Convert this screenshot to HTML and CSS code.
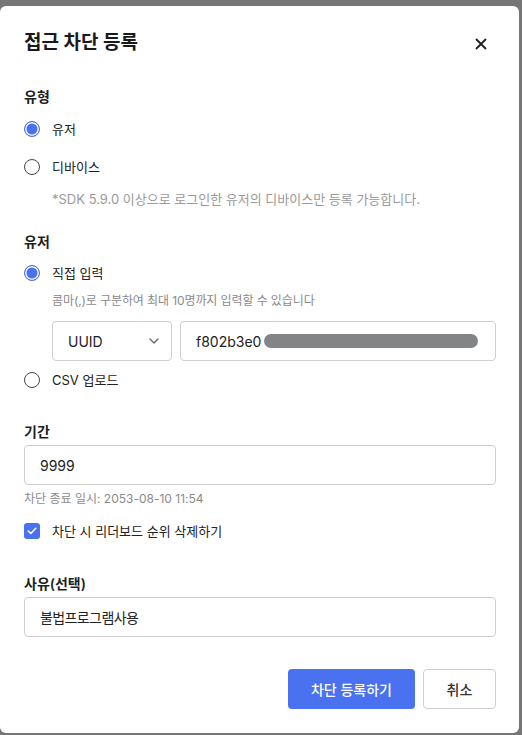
FILE: index.html
```html
<!DOCTYPE html>
<html lang="ko">
<head>
<meta charset="utf-8">
<title>접근 차단 등록</title>
<link rel="stylesheet" href="styles.css">
</head>
<body>
<div class="modal">
  <div class="modal-header">
    <h2 class="title">접근 차단 등록</h2>
    <button class="close" aria-label="닫기">
      <svg width="12" height="12" viewBox="0 0 12 12"><path d="M1.5 1.5 L10.5 10.5 M10.5 1.5 L1.5 10.5" stroke="#1f1f1f" stroke-width="1.8" stroke-linecap="round"/></svg>
    </button>
  </div>

  <div class="label l-type">유형</div>
  <div class="radio r-user"><span class="dot checked"></span><span>유저</span></div>
  <div class="radio r-device"><span class="dot"></span><span>디바이스</span></div>
  <div class="note">*SDK 5.9.0 이상으로 로그인한 유저의 디바이스만 등록 가능합니다.</div>

  <div class="label l-user">유저</div>
  <div class="radio r-direct"><span class="dot checked"></span><span>직접 입력</span></div>
  <div class="helper">콤마(,)로 구분하여 최대 10명까지 입력할 수 있습니다</div>
  <div class="input-row">
    <div class="select">
      <span>UUID</span>
      <svg width="10" height="6" viewBox="0 0 10 6"><path d="M1 1 L5 5 L9 1" fill="none" stroke="#666" stroke-width="1.3" stroke-linecap="round" stroke-linejoin="round"/></svg>
    </div>
    <div class="box uuid"><span>f802b3e0</span><span class="blur"></span></div>
  </div>
  <div class="radio r-csv"><span class="dot"></span><span>CSV 업로드</span></div>

  <div class="label l-period">기간</div>
  <div class="box full period">9999</div>
  <div class="end-date">차단 종료 일시: 2053-08-10 11:54</div>
  <div class="check-row">
    <span class="checkbox">
      <svg width="10" height="8" viewBox="0 0 10 8"><path d="M1.2 4 L3.8 6.5 L8.8 1.3" fill="none" stroke="#fff" stroke-width="1.5" stroke-linecap="round" stroke-linejoin="round"/></svg>
    </span>
    <span>차단 시 리더보드 순위 삭제하기</span>
  </div>

  <div class="label l-reason">사유(선택)</div>
  <div class="box full reason"><span class="ko">불법프로그램사용</span></div>

  <div class="footer">
    <button class="btn primary">차단 등록하기</button>
    <button class="btn cancel">취소</button>
  </div>
</div>
</body>
</html>
```
FILE: styles.css
```css
* { box-sizing: border-box; }
html, body { margin: 0; padding: 0; }
body {
  background: #767676;
  width: 522px;
  height: 735px;
  overflow: hidden;
  padding-top: 6px;
  font-family: "Inter", "Noto Sans CJK KR", sans-serif;
  color: #222;
}
.modal {
  width: 519px;
  background: #fff;
  border-radius: 6px;
  padding: 23px 23px 24px 24px;
  display: flex;
  flex-direction: column;
  align-items: flex-start;
}
.modal-header {
  width: 100%;
  display: flex;
  align-items: center;
  justify-content: space-between;
  height: 28px;
}
.title {
  margin: 0;
  font-size: 19px;
  line-height: 28px;
  font-weight: 700;
  color: #1a1a1a;
}
.close {
  border: 0;
  background: none;
  padding: 0;
  width: 12px;
  height: 12px;
  margin-right: 9px;
  margin-top: 1px;
  display: flex;
}
.label {
  font-size: 14px;
  line-height: 20px;
  font-weight: 600;
  color: #1f1f1f;
}
.radio {
  display: flex;
  align-items: center;
  gap: 12px;
  font-size: 13px;
  line-height: 20px;
  color: #222;
}
.dot {
  width: 16px;
  height: 16px;
  border-radius: 50%;
  border: 1.5px solid #444;
  background: #fff;
  flex: none;
}
.dot.checked {
  border: 1.5px solid #4a72f0;
  background: #4a72f0;
  box-shadow: inset 0 0 0 1.5px #fff;
}
.note {
  margin-left: 28px;
  font-size: 13px;
  line-height: 18px;
  color: #9a9a9a;
}
.helper {
  margin-left: 28px;
  font-size: 12px;
  line-height: 18px;
  color: #8a8a8a;
  letter-spacing: -0.1px;
}
.end-date {
  font-size: 12px;
  line-height: 18px;
  color: #8a8a8a;
}
.input-row {
  margin-left: 28px;
  display: flex;
  gap: 8px;
  width: 444px;
}
.select {
  flex: none;
  width: 120px;
  height: 40px;
  border: 1px solid #cfcfcf;
  border-radius: 4px;
  display: flex;
  align-items: center;
  justify-content: space-between;
  padding: 0 12px 0 15px;
  font-size: 14px;
}
.box {
  height: 40px;
  border: 1px solid #cfcfcf;
  border-radius: 4px;
  display: flex;
  align-items: center;
  padding: 0 15px;
  font-size: 14px;
  color: #222;
}
.uuid { flex: 1 1 auto; min-width: 0; gap: 3px; }
.blur {
  flex: none;
  width: 214px;
  height: 14px;
  border-radius: 7px;
  background: #838486;
}
.full { width: 472px; }
.ko { letter-spacing: -0.6px; }
.check-row {
  display: flex;
  align-items: center;
  gap: 12px;
  font-size: 13px;
  line-height: 20px;
}
.checkbox {
  width: 16px;
  height: 16px;
  border-radius: 3px;
  background: #4a72f0;
  display: flex;
  align-items: center;
  justify-content: center;
}
.footer {
  width: 100%;
  display: flex;
  justify-content: flex-end;
  gap: 8px;
}
.btn {
  height: 40px;
  border-radius: 4px;
  font-family: inherit;
  font-size: 14px;
  font-weight: 500;
  padding: 0;
}
.primary {
  width: 127px;
  background: #4a72f0;
  border: 0;
  color: #fff;
}
.cancel {
  width: 73px;
  background: #fff;
  border: 1px solid #cfcfcf;
  color: #333;
}

.l-type { margin-top: 30px; }
.r-user { margin-top: 12px; }
.r-device { margin-top: 18px; }
.note { margin-top: 13px; }
.l-user { margin-top: 24px; }
.r-direct { margin-top: 11px; }
.helper { margin-top: 9px; }
.input-row { margin-top: 11px; }
.r-csv { margin-top: 9px; }
.l-period { margin-top: 32px; }
.period { margin-top: 3px; }
.end-date { margin-top: 5px; }
.check-row { margin-top: 13px; }
.l-reason { margin-top: 33px; }
.reason { margin-top: 3px; }
.footer { margin-top: 32px; }
```
